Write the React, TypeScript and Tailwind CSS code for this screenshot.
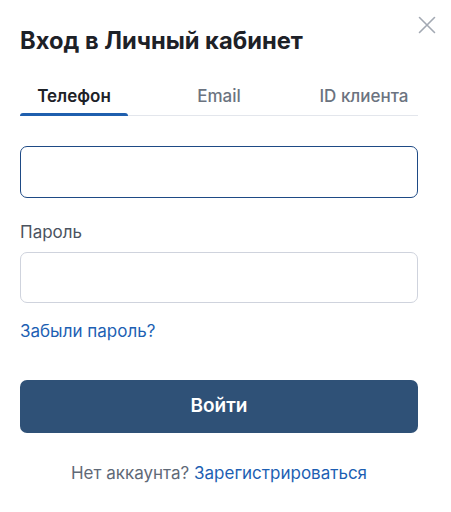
import { useState } from 'react'

const tabs = ['Телефон', 'Email', 'ID клиента']

export default function App() {
    const [active, setActive] = useState(0)

    return (
        <div className="relative min-h-[512px] w-[451px] bg-white pl-5 pr-[33px] pt-[25px] font-['Inter','Noto_Sans',sans-serif]">
            {/* Close */}
            <button className="absolute right-[15px] top-[16px] flex h-[18px] w-[18px] items-center justify-center text-[#a3a9b3]">
                <svg width="18" height="18" viewBox="0 0 18 18" fill="none" stroke="currentColor" strokeWidth="1.6" strokeLinecap="round">
                    <path d="M1.5 1.5l15 15M16.5 1.5l-15 15" />
                </svg>
            </button>

            <h1 className="text-[23.7px] font-bold leading-8 text-[#1d2127]">Вход в Личный кабинет</h1>

            {/* Tabs */}
            <div className="mt-[27px] flex justify-between border-b border-[#e3e6ec]">
                {tabs.map((tab, i) => (
                    <button
                        key={tab}
                        onClick={() => setActive(i)}
                        className={`relative w-[108px] pb-[7px] text-center text-[17px] leading-6 ${active === i ? 'font-semibold text-[#1d2127]' : 'font-medium text-[#6b7380]'}`}
                    >
                        {tab}
                        {active === i && (
                            <span className="absolute bottom-[-1px] left-0 right-0 h-[3px] rounded-t-[3px] bg-[#1f5fae]" />
                        )}
                    </button>
                ))}
            </div>

            <input className="mt-[30px] block h-[52px] w-full rounded-[7px] border border-[#1e4a85] px-4 text-[17px] outline-none" />

            <label className="mt-[22px] block text-[17px] leading-6 text-[#4b5360]">Пароль</label>
            <input type="password" className="mt-2 block h-[51px] w-full rounded-[7px] border border-[#cfd3dd] px-4 text-[17px] outline-none" />

            <a className="mt-4 block text-[17px] leading-6 text-[#1d5fb3]">Забыли пароль?</a>

            <button className="mt-[37px] flex h-[53px] w-full items-center justify-center rounded-[7px] bg-[#2f5177] text-[19px] font-semibold text-white">
                Войти
            </button>

            <p className="mt-[28px] text-center text-[17px] leading-6 text-[#5f6977]">
                Нет аккаунта? <a className="text-[#1d5fb3]">Зарегистрироваться</a>
            </p>
        </div>
    )
}
